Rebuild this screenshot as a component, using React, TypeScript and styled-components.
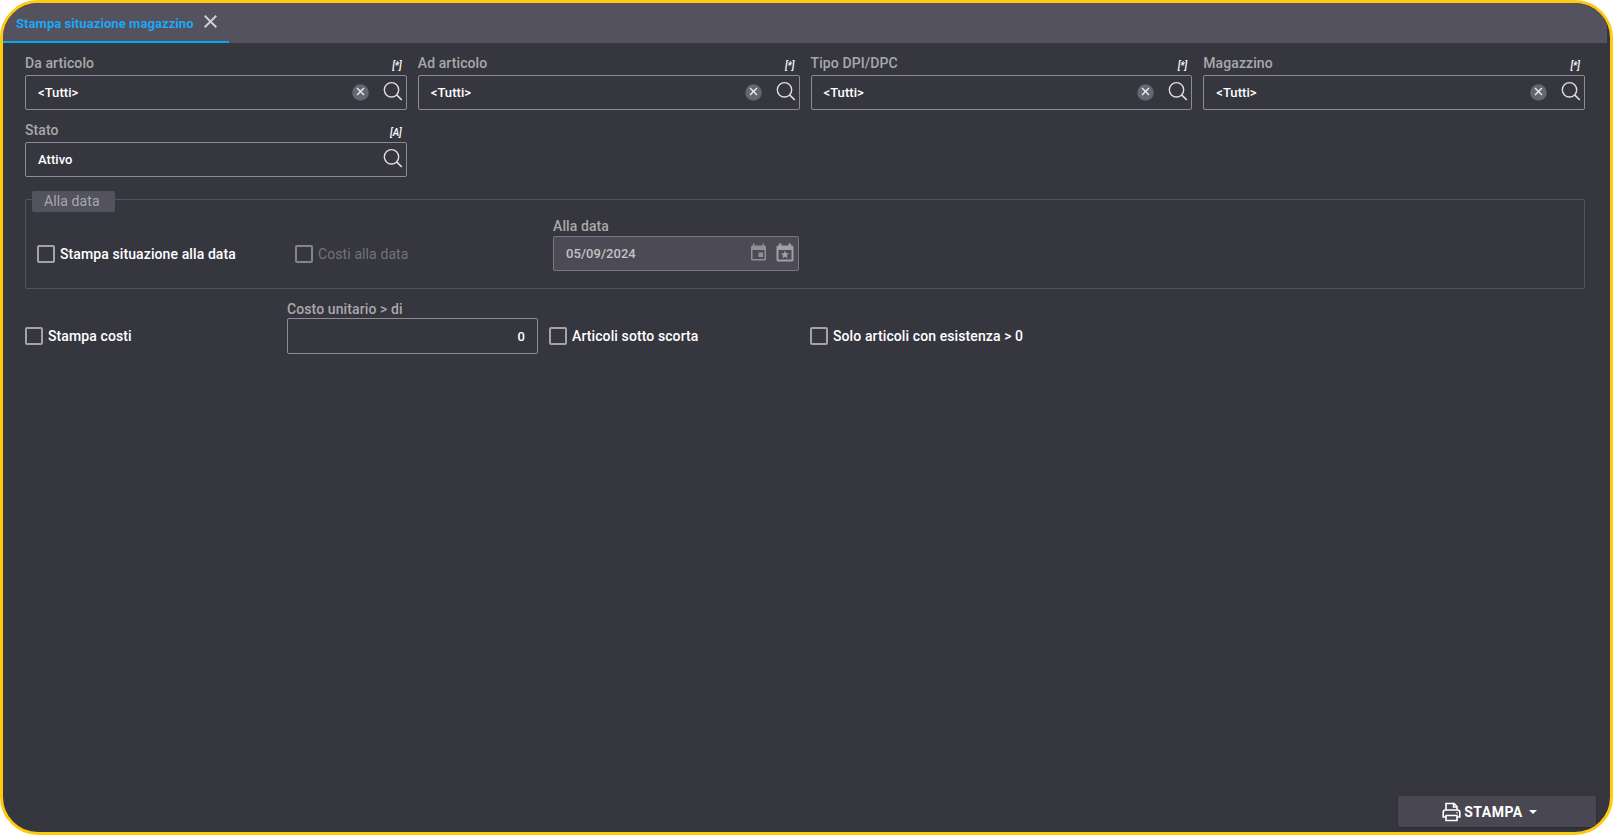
import React from 'react';
import styled, { createGlobalStyle } from 'styled-components';

const GlobalStyle = createGlobalStyle`
  * { box-sizing: border-box; }
  body { margin: 0; background: #fff; font-family: Roboto, "Liberation Sans", sans-serif; }
`;

const Frame = styled.div`
  width: 1613px;
  height: 835px;
  border: 3px solid #ffc90e;
  border-radius: 38px;
  overflow: hidden;
  background: #36363f;
  display: flex;
  flex-direction: column;
`;

const TabBar = styled.header`
  height: 40px;
  flex: none;
  margin-right: 3px;
  background: #53525e;
  display: flex;
`;

const Tab = styled.div`
  width: 226px;
  padding: 0 10px 0 13px;
  border-bottom: 2px solid #03a9f4;
  display: flex;
  align-items: center;
  gap: 10px;
  color: #1ea7f5;
  font-size: 13px;
  font-weight: 700;
  letter-spacing: 0.07px;
  white-space: nowrap;
`;

const TabTitle = styled.span`
  padding-top: 3px;
`;

const CloseIcon = styled.svg`
  flex: none;
  width: 13px;
  height: 13px;
  margin-bottom: 1px;
`;

const Form = styled.main`
  flex: 1;
  padding: 11px 25px 0 22px;
  display: flex;
  flex-direction: column;
`;

const FilterGrid = styled.section`
  display: grid;
  grid-template-columns: repeat(4, 1fr);
  column-gap: 11px;
  row-gap: 11px;
`;

const Field = styled.div<{ $width?: number }>`
  width: ${p => (p.$width ? `${p.$width}px` : 'auto')};
  flex: none;
  display: flex;
  flex-direction: column;
`;

const LabelRow = styled.div<{ $height?: number }>`
  height: ${p => p.$height ?? 21}px;
  padding-right: 5px;
  display: flex;
  justify-content: space-between;
  line-height: 18px;
`;

const Label = styled.label`
  color: #a9a8a9;
  font-size: 14px;
  font-weight: 500;
  letter-spacing: 0.1px;
`;

const Hint = styled.span`
  padding-top: 4px;
  color: #fff;
  font-size: 10px;
  line-height: 16px;
  font-style: italic;
  font-weight: 500;
`;

const Box = styled.div<{ $disabled?: boolean; $height?: number; $end?: boolean }>`
  height: ${p => p.$height ?? 35}px;
  border: 1px solid ${p => (p.$disabled ? '#777681' : '#8d8c94')};
  border-radius: 2px;
  background: ${p => (p.$disabled ? '#4b4a55' : 'transparent')};
  color: ${p => (p.$disabled ? '#c3c2c6' : '#fff')};
  padding: 0 ${p => (p.$end ? 12 : 3)}px 0 12px;
  display: flex;
  align-items: center;
  justify-content: ${p => (p.$end ? 'flex-end' : 'space-between')};
  font-size: 13px;
  font-weight: 500;
  letter-spacing: 0.05px;
`;

const Actions = styled.span<{ $gap: number }>`
  display: flex;
  align-items: center;
  gap: ${p => p.$gap}px;
`;

const Icon = styled.svg<{ $lift?: number }>`
  display: block;
  flex: none;
  margin-bottom: ${p => p.$lift ?? 0}px;
`;

const Group = styled.fieldset`
  margin: 12px 0 0;
  height: 100px;
  min-width: 0;
  padding: 0 11px;
  border: 1px solid #53525f;
  border-radius: 2px;
`;

const Legend = styled.legend`
  position: relative;
  top: 2px;
  margin-left: -5px;
  width: 83px;
  height: 21px;
  padding: 0 11px 0 12px;
  border-radius: 2px;
  background: #53525f;
  color: #a9a8a9;
  font-size: 14px;
  line-height: 21px;
  letter-spacing: 0.1px;
`;

const GroupRow = styled.div`
  height: 62px;
  padding-top: 7px;
  display: flex;
  align-items: flex-start;
`;

const Check = styled.label<{ $width: number; $disabled?: boolean; $top: number }>`
  width: ${p => p.$width}px;
  flex: none;
  margin-top: ${p => p.$top}px;
  display: flex;
  align-items: center;
  gap: 5px;
  color: ${p => (p.$disabled ? '#747378' : '#fff')};
  font-size: 14px;
  line-height: 18px;
  font-weight: ${p => (p.$disabled ? 400 : 500)};
  letter-spacing: 0.1px;
  white-space: nowrap;
`;

const Tick = styled.span<{ $disabled?: boolean }>`
  width: 18px;
  height: 18px;
  flex: none;
  border: 2px solid ${p => (p.$disabled ? '#858489' : '#a3a2a6')};
  border-radius: 2px;
`;

const OptionsRow = styled.section`
  margin-top: 11px;
  display: flex;
  align-items: flex-start;
`;

const Footer = styled.footer`
  padding: 0 14px 5px 0;
  display: flex;
  justify-content: flex-end;
`;

const PrintButton = styled.button`
  width: 198px;
  height: 31px;
  padding: 0 15px 0 0;
  border: 0;
  border-radius: 2px;
  background: #484752;
  box-shadow: 0 1px 3px rgba(0, 0, 0, 0.3);
  color: #fff;
  display: flex;
  align-items: center;
  justify-content: center;
  gap: 3px;
  font-family: inherit;
  font-size: 14px;
  font-weight: 700;
  letter-spacing: 0.5px;
`;

const Caret = styled.span`
  margin-left: 3px;
  border: 4.5px solid transparent;
  border-top-color: #fff;
  border-bottom: 0;
`;

const SearchIcon = () => (
  <Icon $lift={3} width="20" height="20" viewBox="0 0 20 20" fill="none" stroke="#dddce0" strokeWidth="1.4">
    <circle cx="8.500" cy="8.800" r="7.200" />
    <path d="M13.600 13.900L18.800 19" strokeWidth="1.700" />
  </Icon>
);

const ClearIcon = () => (
  <Icon width="17" height="17" viewBox="0 0 17 17">
    <circle cx="8.500" cy="8.500" r="8.300" fill="#666572" />
    <path d="M5 4L12 11M12 4L5 11" stroke="#f0f0f0" strokeWidth="1.400" fill="none" />
  </Icon>
);

const CalendarIcon = ({ star = false }: { star?: boolean }) => (
  <Icon $lift={2} width="20" height="22" viewBox="0 0 20 22" fill={star ? '#a09fa2' : '#919095'}>
    {star ? (
      <>
        <path fillRule="evenodd" d="M4 1.500h2.500v2h7v-2H16v2h1q1.500 0 1.500 1.500v13q0 1.500-1.500 1.500H3Q1.500 19.500 1.500 18V5Q1.500 3.500 3 3.500h1zM3.500 8v9.500h13V8z" />
        <path d="M10 8.700l1.200 2.500 2.900.3-2.200 1.900.7 2.800-2.600-1.500-2.600 1.500.7-2.800-2.200-1.900 2.900-.3z" />
      </>
    ) : (
      <>
        <path fillRule="evenodd" d="M5 1.500h1.500v2h8v-2H16v2h.5q1.500 0 1.500 1.500v12q0 1.500-1.500 1.500h-12Q3 18.500 3 17V5q0-1.500 1.500-1.500H5zM4.500 8v9h12V8z" />
        <path d="M10.500 10.500h4.500v4.500h-4.500z" />
      </>
    )}
  </Icon>
);

const PrinterIcon = () => (
  <Icon width="19" height="20" viewBox="0 0 19 20" fill="none" stroke="#fff" strokeWidth="1.600">
    <path d="M4 8V1.500h8L15 4.500V8M11.500 1.500V5H15M4 15H1.200v-4.500Q1.200 8 3.500 8h12q2.300 0 2.300 2.500V15H15M4 13.500h11v5H4z" />
    <circle cx="15" cy="10.700" r=".5" fill="#fff" strokeWidth=".5" />
  </Icon>
);

const LookupField = ({ label, value, hint, clearable }: {
  label: string; value: string; hint: string; clearable?: boolean;
}) => (
  <Field>
    <LabelRow>
      <Label>{label}</Label>
      <Hint>{hint}</Hint>
    </LabelRow>
    <Box>
      <span>{value}</span>
      <Actions $gap={14}>
        {clearable && <ClearIcon />}
        <SearchIcon />
      </Actions>
    </Box>
  </Field>
);

const CheckOption = ({ label, width, top, disabled }: {
  label: string; width: number; top: number; disabled?: boolean;
}) => (
  <Check $width={width} $top={top} $disabled={disabled}>
    <Tick $disabled={disabled} />
    {label}
  </Check>
);

export default function App() {
  return (
    <>
      <GlobalStyle />
      <Frame>
        <TabBar>
          <Tab>
            <TabTitle>Stampa situazione magazzino</TabTitle>
            <CloseIcon viewBox="0 0 13 13" fill="none" stroke="#d0cfd2" strokeWidth="2">
              <path d="M.7.700l11.600 11.600M12.300.700L.7 12.300" />
            </CloseIcon>
          </Tab>
        </TabBar>
        <Form>
          <FilterGrid>
            <LookupField label="Da articolo" value="<Tutti>" hint="[*]" clearable />
            <LookupField label="Ad articolo" value="<Tutti>" hint="[*]" clearable />
            <LookupField label="Tipo DPI/DPC" value="<Tutti>" hint="[*]" clearable />
            <LookupField label="Magazzino" value="<Tutti>" hint="[*]" clearable />
            <LookupField label="Stato" value="Attivo" hint="[A]" />
          </FilterGrid>
          <Group>
            <Legend>Alla data</Legend>
            <GroupRow>
              <CheckOption label="Stampa situazione alla data" width={258} top={28} />
              <CheckOption label="Costi alla data" width={258} top={28} disabled />
              <Field $width={246}>
                <LabelRow $height={19}>
                  <Label>Alla data</Label>
                </LabelRow>
                <Box $disabled>
                  <span>05/09/2024</span>
                  <Actions $gap={7}>
                    <CalendarIcon />
                    <CalendarIcon star />
                  </Actions>
                </Box>
              </Field>
            </GroupRow>
          </Group>
          <OptionsRow>
            <CheckOption label="Stampa costi" width={262} top={27} />
            <Field $width={262}>
              <LabelRow $height={18}>
                <Label>Costo unitario &gt; di</Label>
              </LabelRow>
              <Field $width={251}>
                <Box $height={36} $end>0</Box>
              </Field>
            </Field>
            <CheckOption label="Articoli sotto scorta" width={261} top={27} />
            <CheckOption label="Solo articoli con esistenza > 0" width={262} top={27} />
          </OptionsRow>
        </Form>
        <Footer>
          <PrintButton>
            <PrinterIcon />
            STAMPA
            <Caret />
          </PrintButton>
        </Footer>
      </Frame>
    </>
  );
}
